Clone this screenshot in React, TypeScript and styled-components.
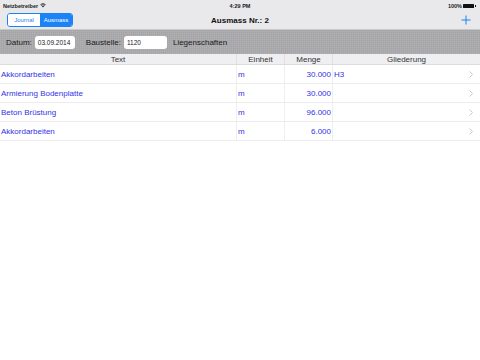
import React from "react";
import styled, { createGlobalStyle } from "styled-components";

const GlobalStyle = createGlobalStyle`
  html, body { margin: 0; padding: 0; background: #ffffff; }
  body { font-family: "Liberation Sans", Arial, Helvetica, sans-serif; }
  * { box-sizing: border-box; }
`;

const Page = styled.div`
  width: 480px;
  height: 360px;
  background: #ffffff;
  display: flex;
  flex-direction: column;
  overflow: hidden;
`;

const Top = styled.div`
  background: #e9e9eb;
  display: flex;
  flex-direction: column;
`;

const StatusBar = styled.div`
  height: 11px;
  display: grid;
  grid-template-columns: 1fr auto 1fr;
  align-items: center;
  padding: 0 3px;
  font-size: 5.5px;
  color: #1a1a1a;
`;

const Carrier = styled.div`
  display: flex;
  align-items: center;
  gap: 2px;
  font-weight: bold;
`;

const Clock = styled.div`
  font-weight: bold;
  text-align: center;
`;

const Battery = styled.div`
  display: flex;
  align-items: center;
  justify-content: flex-end;
  gap: 1px;
  font-weight: bold;
`;

const BatteryBody = styled.div`
  width: 11px;
  height: 4px;
  background: #111;
  border-radius: 0.5px;
  margin-right: 3px;
  position: relative;
  &::after {
    content: "";
    position: absolute;
    right: -1.5px;
    top: 1px;
    width: 1px;
    height: 2px;
    background: #111;
  }
`;

const NavBar = styled.div`
  height: 19px;
  display: grid;
  grid-template-columns: 1fr auto 1fr;
  align-items: center;
  padding: 0 7px 0 7px;
  border-bottom: 1px solid #c9c9cc;
`;

const Segmented = styled.div`
  display: flex;
  width: 66px;
  height: 14px;
  border: 1px solid #1b83f7;
  border-radius: 3px;
  overflow: hidden;
  justify-self: start;
`;

const Segment = styled.div<{ $active?: boolean }>`
  flex: ${(p) => (p.$active ? "0 0 32px" : "1")};
  display: flex;
  align-items: center;
  justify-content: center;
  font-size: 6px;
  color: ${(p) => (p.$active ? "#ffffff" : "#1b83f7")};
  background: ${(p) => (p.$active ? "#1b83f7" : "#ffffff")};
`;

const Title = styled.div`
  font-size: 8px;
  font-weight: bold;
  color: #111;
  text-align: center;
`;

const AddButton = styled.div`
  justify-self: end;
  width: 10px;
  height: 10px;
  margin-right: 2px;
  display: flex;
`;

const Toolbar = styled.div`
  height: 24px;
  display: flex;
  align-items: center;
  padding: 0 6px;
  gap: 3px;
  font-size: 8px;
  color: #1a1a1a;
  background-color: #ababad;
  background-image:
    repeating-linear-gradient(90deg, rgba(255,255,255,0.035) 0px, rgba(255,255,255,0.035) 1px, rgba(0,0,0,0.025) 1px, rgba(0,0,0,0.025) 2px),
    repeating-linear-gradient(0deg, rgba(255,255,255,0.025) 0px, rgba(255,255,255,0.025) 1px, rgba(0,0,0,0.02) 1px, rgba(0,0,0,0.02) 2px);
`;

const Label = styled.span<{ $gap?: number }>`
  margin-left: ${(p) => p.$gap ?? 0}px;
`;

const Field = styled.div<{ $width: number }>`
  width: ${(p) => p.$width}px;
  height: 13px;
  background: #ffffff;
  border-radius: 3px;
  font-size: 6.5px;
  display: flex;
  align-items: center;
  padding-left: 3px;
  color: #222;
`;

const Table = styled.div`
  display: flex;
  flex-direction: column;
`;

const Row = styled.div<{ $header?: boolean }>`
  display: grid;
  grid-template-columns: 237px 48px 48px 1fr;
  height: ${(p) => (p.$header ? 11 : 19)}px;
  background: ${(p) => (p.$header ? "#efeff1" : "#ffffff")};
  border-bottom: 1px solid ${(p) => (p.$header ? "#dcdcdc" : "#ececec")};
`;

const HeadCell = styled.div`
  font-size: 8px;
  color: #333;
  display: flex;
  align-items: center;
  justify-content: center;
  border-right: 1px solid #e0e0e0;
  &:last-child { border-right: none; }
`;

const Cell = styled.div<{ $align?: "left" | "right" }>`
  font-size: 8px;
  color: #3232e6;
  display: flex;
  align-items: center;
  justify-content: ${(p) => (p.$align === "right" ? "flex-end" : "flex-start")};
  padding: 0 ${(p) => (p.$align === "right" ? "1px" : "0")} 0 ${(p) => (p.$align === "right" ? "0" : "1px")};
  border-right: 1px solid #efefef;
  &:last-child { border-right: none; }
`;

const GroupCell = styled(Cell)`
  justify-content: space-between;
  padding-right: 7px;
`;

const Chevron = styled.svg`
  width: 4px;
  height: 7px;
`;

const rows = [
  { text: "Akkordarbeiten", unit: "m", qty: "30.000", group: "H3" },
  { text: "Armierung Bodenplatte", unit: "m", qty: "30.000", group: "" },
  { text: "Beton Brüstung", unit: "m", qty: "96.000", group: "" },
  { text: "Akkordarbeiten", unit: "m", qty: "6.000", group: "" },
];

export default function App() {
  return (
    <>
      <GlobalStyle />
      <Page>
        <Top>
          <StatusBar>
            <Carrier>
              Netzbetreiber
              <svg width="6" height="5" viewBox="0 0 12 9">
                <path d="M6 8.5 L8.2 6 A3.2 3.2 0 0 0 3.8 6 Z" fill="#222" />
                <path d="M2.4 4.6 A5.2 5.2 0 0 1 9.6 4.6" stroke="#222" strokeWidth="1.6" fill="none" />
                <path d="M0.8 2.9 A7.6 7.6 0 0 1 11.2 2.9" stroke="#222" strokeWidth="1.6" fill="none" />
              </svg>
            </Carrier>
            <Clock>4:29 PM</Clock>
            <Battery>
              100%
              <BatteryBody />
            </Battery>
          </StatusBar>
          <NavBar>
            <Segmented>
              <Segment>Journal</Segment>
              <Segment $active>Ausmass</Segment>
            </Segmented>
            <Title>Ausmass Nr.: 2</Title>
            <AddButton>
              <svg width="10" height="10" viewBox="0 0 10 10">
                <path d="M5 0.5 V9.5 M0.5 5 H9.5" stroke="#1b83f7" strokeWidth="1" />
              </svg>
            </AddButton>
          </NavBar>
        </Top>
        <Toolbar>
          <Label>Datum:</Label>
          <Field $width={40}>03.09.2014</Field>
          <Label $gap={8}>Baustelle:</Label>
          <Field $width={43}>1120</Field>
          <Label $gap={3}>Liegenschaften</Label>
        </Toolbar>
        <Table>
          <Row $header>
            <HeadCell>Text</HeadCell>
            <HeadCell>Einheit</HeadCell>
            <HeadCell>Menge</HeadCell>
            <HeadCell>Gliederung</HeadCell>
          </Row>
          {rows.map((r, i) => (
            <Row key={i}>
              <Cell>{r.text}</Cell>
              <Cell>{r.unit}</Cell>
              <Cell $align="right">{r.qty}</Cell>
              <GroupCell>
                <span>{r.group}</span>
                <Chevron viewBox="0 0 4 7">
                  <path d="M0.5 0.5 L3.5 3.5 L0.5 6.5" stroke="#c4c4c8" strokeWidth="0.9" fill="none" />
                </Chevron>
              </GroupCell>
            </Row>
          ))}
        </Table>
      </Page>
    </>
  );
}
